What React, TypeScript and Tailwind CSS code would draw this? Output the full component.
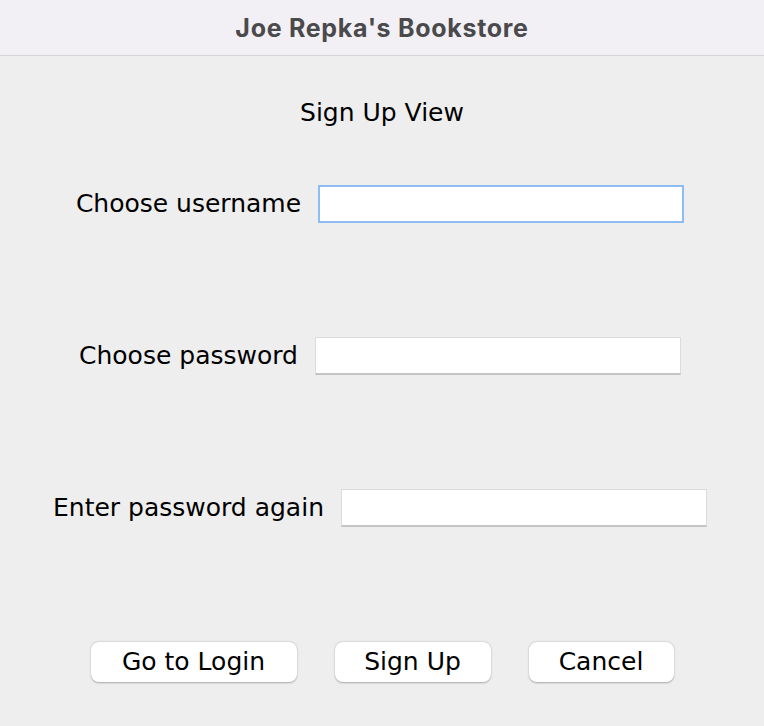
import { useState } from 'react'

const font = { fontFamily: '"DejaVu Sans", "Liberation Sans", sans-serif' }

function Field({ label, focused }: { label: string; focused?: boolean }) {
  const [value, setValue] = useState('')
  return (
    <div className="flex h-[38px] items-center justify-center gap-[17px]">
      <span className="text-[25px] text-black">{label}</span>
      <input
        type={label.includes('password') ? 'password' : 'text'}
        value={value}
        onChange={(e) => setValue(e.target.value)}
        className={
          focused
            ? 'h-[38px] w-[366px] border-2 border-[#8dbdf3] bg-white outline-none'
            : 'h-[38px] w-[366px] border border-[#dcdcdc] border-b-[#c4c4c4] border-b-2 bg-white outline-none'
        }
      />
    </div>
  )
}

export default function App() {
  return (
    <div className="h-[726px] w-[764px] bg-[#eeeeee]" style={font}>
      <div className="flex h-[56px] items-center justify-center border-b border-[#d6d5d8] bg-[#f2f0f4] pt-[3px]">
        <span
          className="text-[25px] font-bold tracking-[0.7px] text-[#4a494c]"
          style={{ fontFamily: 'Inter, Roboto, "Liberation Sans", sans-serif' }}
        >
          Joe Repka's Bookstore
        </span>
      </div>

      <div className="flex flex-col items-center pt-[42px]">
        <div className="h-[30px] text-[25px] leading-[30px] text-black">Sign Up View</div>

        <div className="mt-[57px] mr-[4px] flex flex-col gap-[114px]">
          <Field label="Choose username" focused />
          <Field label="Choose password" />
          <Field label="Enter password again" />
        </div>

        <div className="mt-[115px] flex gap-[38px]">
          <button className="h-[40px] w-[206px] rounded-[8px] bg-white text-[25px] text-black shadow-[0_0.5px_2px_rgba(0,0,0,0.3)]">
            Go to Login
          </button>
          <button className="h-[40px] w-[156px] rounded-[8px] bg-white text-[25px] text-black shadow-[0_0.5px_2px_rgba(0,0,0,0.3)]">
            Sign Up
          </button>
          <button className="h-[40px] w-[145px] rounded-[8px] bg-white text-[25px] text-black shadow-[0_0.5px_2px_rgba(0,0,0,0.3)]">
            Cancel
          </button>
        </div>
      </div>
    </div>
  )
}
